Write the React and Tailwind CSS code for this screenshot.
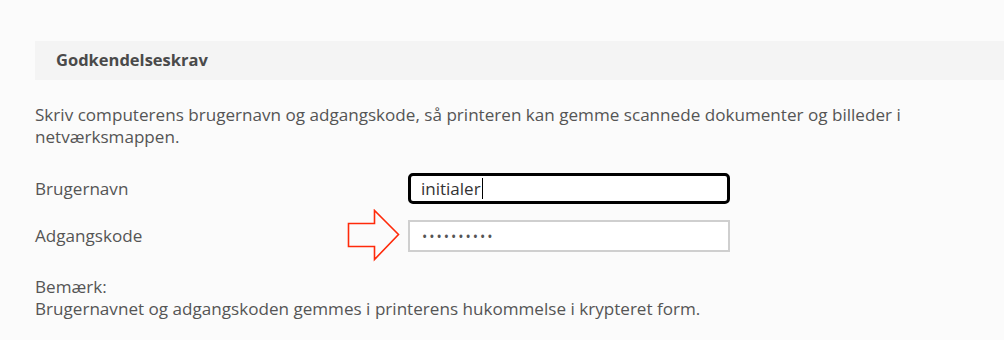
export default function App() {
  return (
    <div className="w-[1004px] h-[340px] overflow-hidden bg-[#fbfbfb] text-[#555555]" style={{ fontFamily: '"Open Sans", "Noto Sans", sans-serif' }}>
      <div className="pl-[35px] -mt-[19px] h-[16px] text-[17px] leading-[16px] text-[#555] whitespace-nowrap">
        Angiv typen af godkendelse og opsætning for mappen
      </div>
      <div className="ml-[35px] mt-[44px] h-[39px] bg-[#f4f4f4] flex items-center pl-[21px]">
        <span className="text-[16.5px] font-bold text-[#4a4a4a]">Godkendelseskrav</span>
      </div>
      <div className="pl-[35px] pr-[80px] mt-[24px] text-[17.1px] leading-[22px]">
        Skriv computerens brugernavn og adgangskode, så printeren kan gemme scannede dokumenter og billeder i netværksmappen.
      </div>
      <div className="pl-[35px] mt-[25px] grid grid-cols-[373px_322px] gap-y-[16px]">
        <div className="flex items-center h-[31px] text-[17.1px]">Brugernavn</div>
        <div className="h-[31px] border-[3px] border-black rounded-[5px] flex items-center px-[10px] bg-white">
          <span className="text-[17px] text-[#333]">initialer</span>
          <span className="w-[1px] h-[21px] bg-black ml-[1px]"></span>
        </div>
        <div className="flex items-center h-[32px] text-[17.1px] relative">
          Adgangskode
          <svg className="absolute left-[312px] top-[-11px]" width="54" height="54" viewBox="0 0 54 54">
            <path d="M1.5 14.5 H27.5 V1.5 L51.5 25.5 L27.5 50.5 V37.5 H1.5 Z" fill="none" stroke="#ff2a0a" strokeWidth="1.6" />
          </svg>
        </div>
        <div className="h-[32px] border-2 border-[#cfcfcf] flex items-center px-[12px] bg-white">
          <span className="text-[14px] tracking-[2px] text-[#555]">••••••••••</span>
        </div>
      </div>
      <div className="pl-[35px] mt-[24px] text-[17.1px] leading-[22px]">
        <div>Bemærk:</div>
        <div>Brugernavnet og adgangskoden gemmes i printerens hukommelse i krypteret form.</div>
      </div>
    </div>
  );
}
